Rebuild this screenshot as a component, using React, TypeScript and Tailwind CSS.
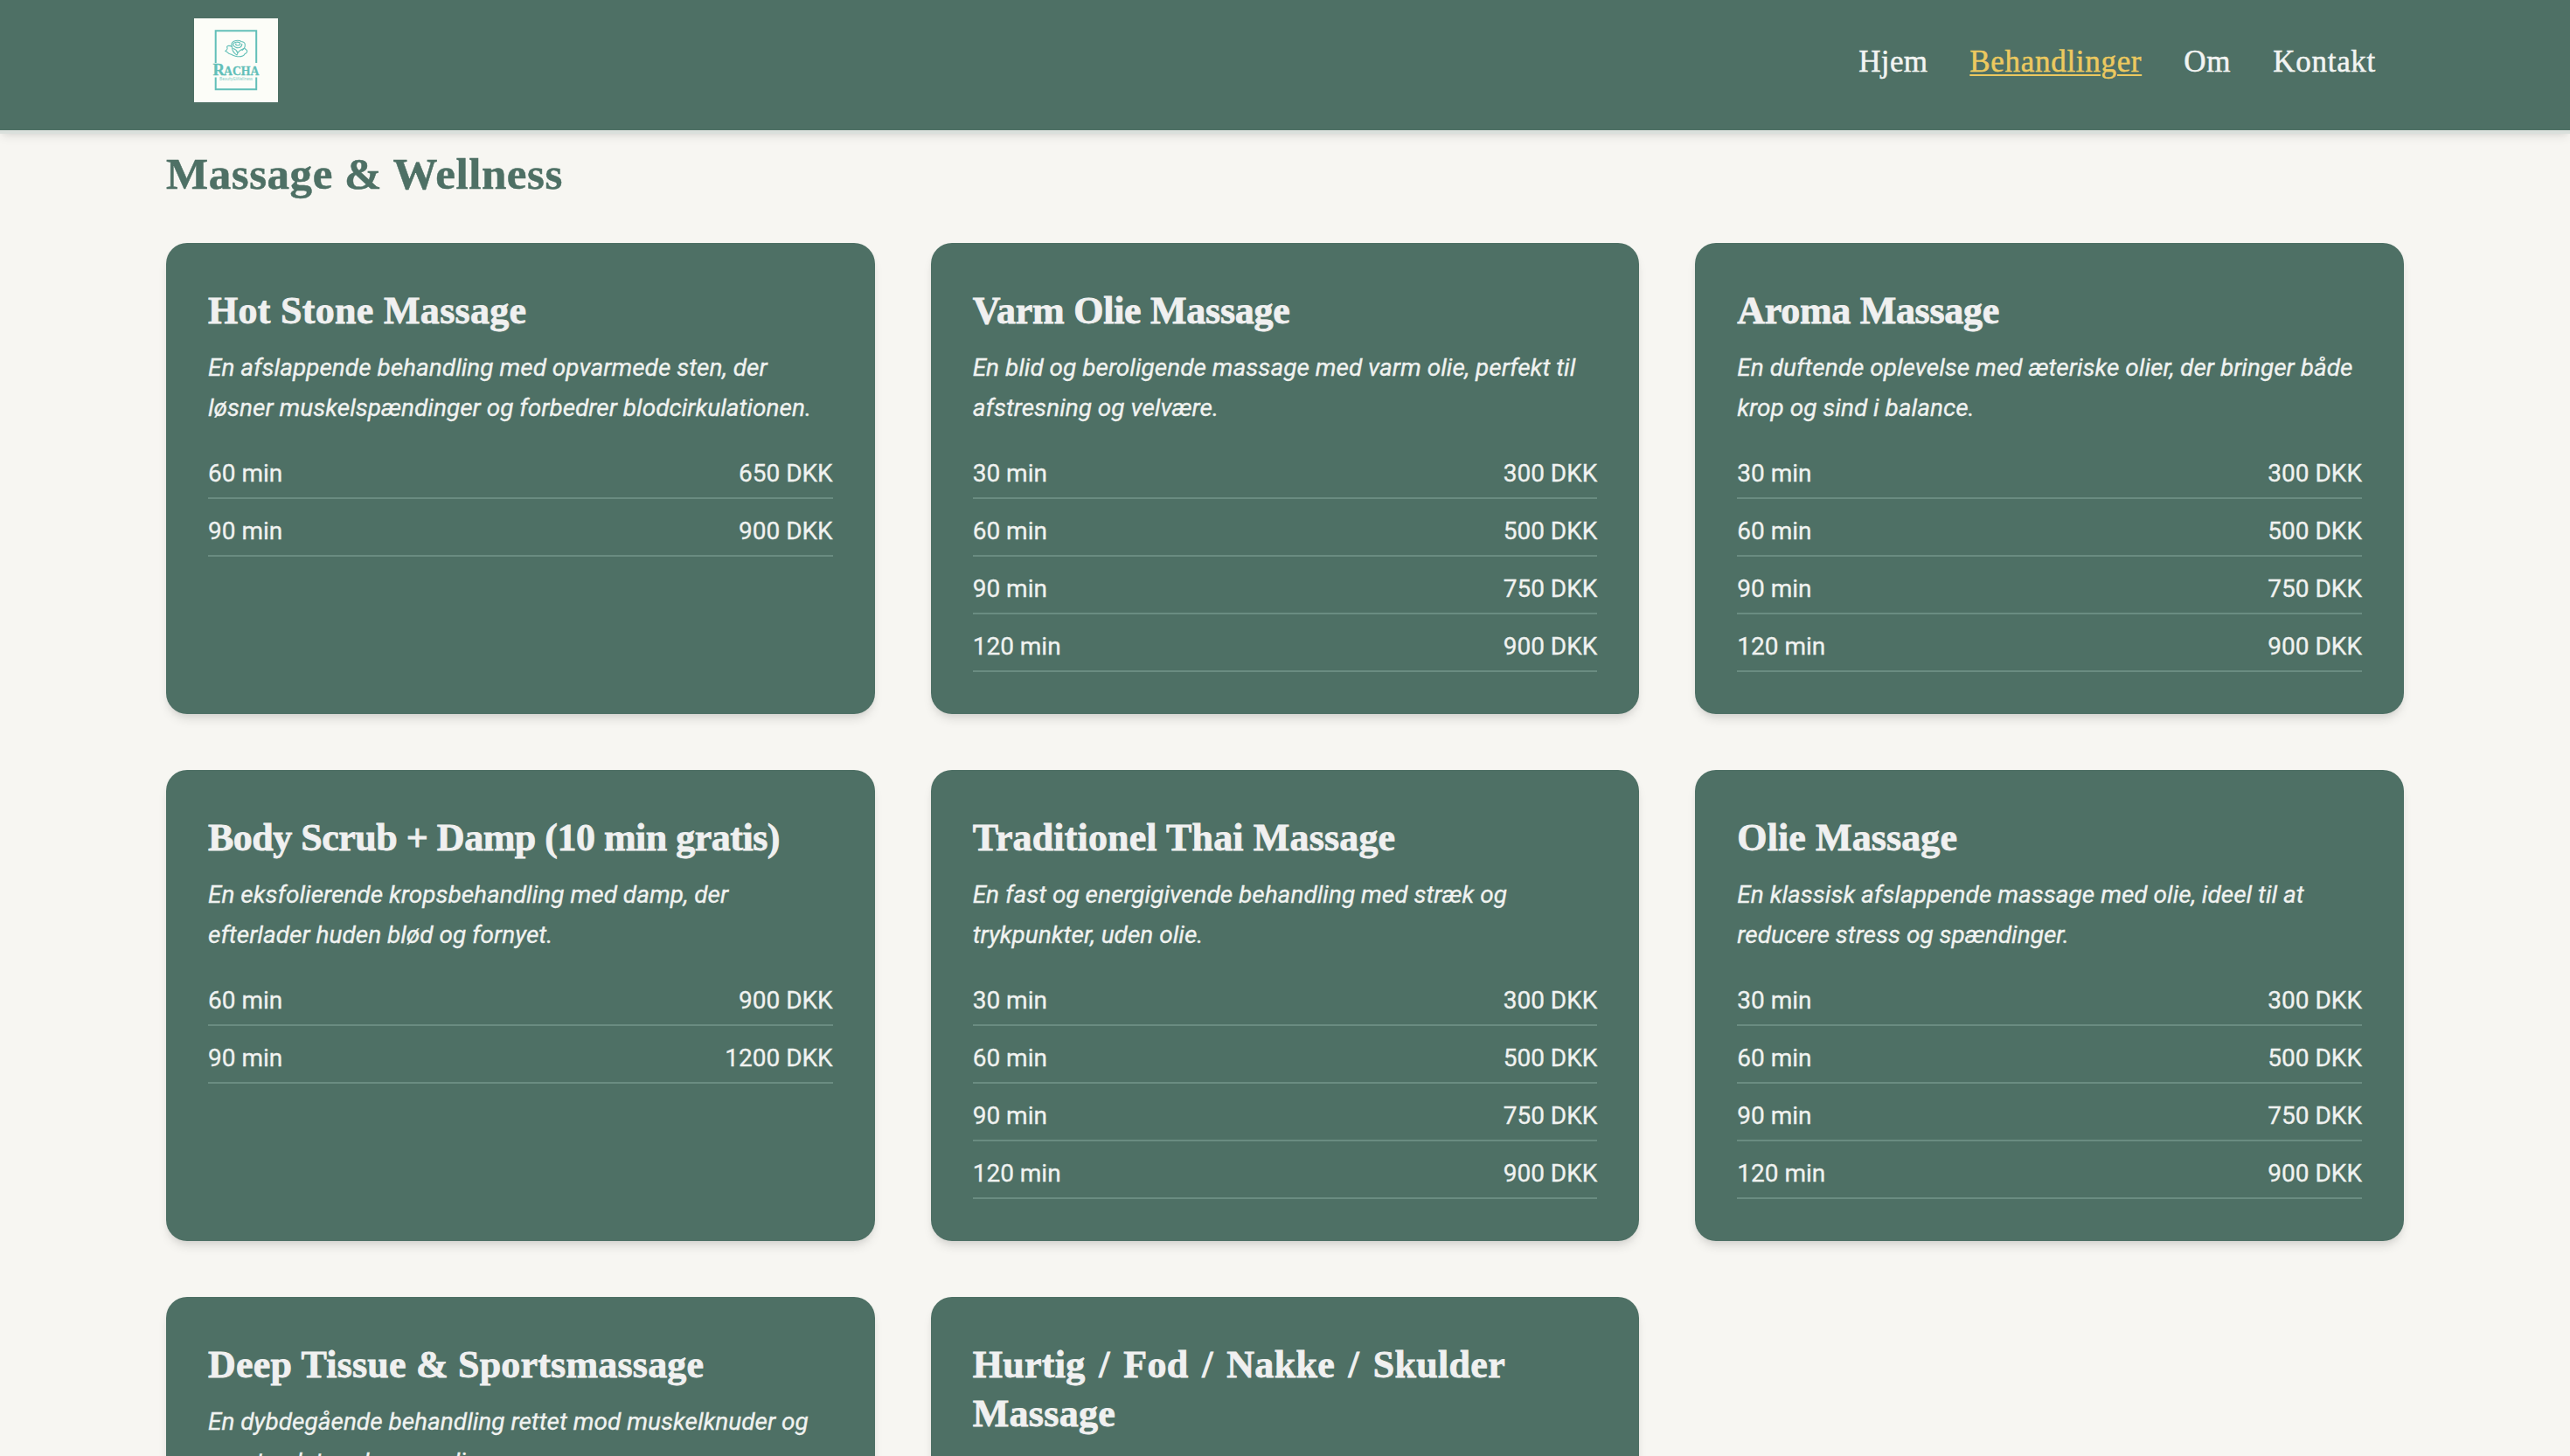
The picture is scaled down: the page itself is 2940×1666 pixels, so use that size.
// ─── Data ─────────────────────────────────────────────────────────────────────
const NAV_ITEMS = [
  { href: '#hjem', label: 'Hjem', className: 'tracking-[0.3px]' },
  { href: '#behandlinger', label: 'Behandlinger', className: 'tracking-[0.7px]' },
  { href: '#om', label: 'Om', className: 'tracking-[0.8px]' },
  { href: '#kontakt', label: 'Kontakt', className: 'tracking-[0.7px]' },
];

const ACTIVE = 'Behandlinger';

const FULL_PRICES = [
  ['30 min', '300 DKK'],
  ['60 min', '500 DKK'],
  ['90 min', '750 DKK'],
  ['120 min', '900 DKK'],
];

const TREATMENTS = [
  {
    title: 'Hot Stone Massage',
    tracking: 'tracking-[0.3px]',
    desc: 'En afslappende behandling med opvarmede sten, der løsner muskelspændinger og forbedrer blodcirkulationen.',
    prices: [['60 min', '650 DKK'], ['90 min', '900 DKK']],
  },
  {
    title: 'Varm Olie Massage',
    tracking: 'tracking-[-0.27px]',
    desc: 'En blid og beroligende massage med varm olie, perfekt til afstresning og velvære.',
    prices: FULL_PRICES,
  },
  {
    title: 'Aroma Massage',
    tracking: 'tracking-[-0.3px]',
    desc: 'En duftende oplevelse med æteriske olier, der bringer både krop og sind i balance.',
    prices: FULL_PRICES,
  },
  {
    title: 'Body Scrub + Damp (10 min gratis)',
    tracking: 'tracking-[-0.5px]',
    desc: 'En eksfolierende kropsbehandling med damp, der efterlader huden blød og fornyet.',
    prices: [['60 min', '900 DKK'], ['90 min', '1200 DKK']],
  },
  {
    title: 'Traditionel Thai Massage',
    tracking: 'tracking-[0.15px]',
    desc: 'En fast og energigivende behandling med stræk og trykpunkter, uden olie.',
    prices: FULL_PRICES,
  },
  {
    title: 'Olie Massage',
    tracking: 'tracking-[0.1px]',
    desc: 'En klassisk afslappende massage med olie, ideel til at reducere stress og spændinger.',
    prices: FULL_PRICES,
  },
  {
    title: 'Deep Tissue & Sportsmassage',
    tracking: 'tracking-[0.2px]',
    desc: 'En dybdegående behandling rettet mod muskelknuder og sportsrelaterede spændinger.',
    prices: FULL_PRICES,
  },
  {
    title: 'Hurtig / Fod / Nakke / Skulder Massage',
    tracking: 'tracking-[0.3px] [word-spacing:4.3px]',
    desc: 'En hurtig og effektiv behandling af fødder, nakke og skuldre.',
    prices: FULL_PRICES,
  },
];

// ─── Logo ─────────────────────────────────────────────────────────────────────
function Logo() {
  return (
    <svg viewBox="0 0 96 96" className="h-24 w-24 bg-[#fcfdf8]" aria-label="Racha Beauty & Wellness">
      <g fill="none" stroke="#62bfb8">
        <path d="M24.7 51V14.3H71.2V51M24.7 67.5V81.3H71.2V67.5" strokeWidth="2" />
        {/* rose */}
        <g strokeWidth="1.1" strokeLinejoin="round" strokeLinecap="round">
          <path d="M43.5 32.5c-1.5-2.5-.5-5 2-6.2 3-1.3 6-1.5 8.5.2 2.500.3 4.500 1.500 4.300 4 .2 2.500-1.300 4.500-3.300 6" />
          <path d="M44.500 29.500c1.500-2.500 5.500-3 8-1.500 1 1.500-.5 3-2.500 3-2 .2-3-1-2-2M44.500 30c1 3 5 4.500 8 3.300 1.500-.6 2.300-2 2.300-4" />
          <path d="M43.500 32.500c-2.500-1.500-5.500-1.500-6 .3 1.200 1 .7 3-1.800 4.700 2.500.3 3 3 5.300 3.300 3.500 1 5 2.700 8.500 2.900 4 .3 7 .3 8.500-3 2-1 3.300-2.200 2.500-4l-2.500-2.200" />
          <path d="M43.500 32.500c-.3 4 1.500 7 5.500 9.500 1-4.500 4-6 8-7.500M45 34.500c2.500 1 4 2.500 4.800 5" />
        </g>
      </g>
      <g fill="#62bfb8">
        <text x="21.600" y="64.700" fontFamily="Liberation Serif" fontWeight="700" fontSize="18" stroke="#62bfb8" strokeWidth="0.3" textLength="13.500" lengthAdjust="spacingAndGlyphs">R</text>
        <text x="34" y="64.700" fontFamily="Liberation Serif" fontWeight="700" fontSize="15" stroke="#62bfb8" strokeWidth="0.3" textLength="40.500" lengthAdjust="spacingAndGlyphs">ACHA</text>
        <text x="29" y="70.600" fontFamily="Lato" fontSize="5.200" textLength="38" lengthAdjust="spacingAndGlyphs" opacity="0.75">Beauty&amp;Wellness</text>
      </g>
    </svg>
  );
}

// ─── Header ───────────────────────────────────────────────────────────────────
function Header() {
  return (
    <header className="relative z-10 h-[153px] border-b-4 border-[#dae0dc] bg-[#4e7065] bg-clip-padding shadow-[0_4px_12px_-2px_rgba(0,0,0,0.1),0_2px_8px_-4px_rgba(0,0,0,0.1)]">
      <div className="mx-auto flex w-[2560px] items-start justify-between px-8 pt-[21px]">
        <Logo />
        <nav className="flex gap-12 pt-[30px] font-['Liberation_Serif',serif] text-[35px] leading-[40px] text-[#f2f4f2] [-webkit-text-stroke:0.5px]">
          {NAV_ITEMS.map(({ href, label, className }) => (
            <a
              key={href}
              href={href}
              className={`${className} ${label === ACTIVE ? 'text-[#ecc95f] underline decoration-[1.5px] underline-offset-[3px]' : ''}`}
            >
              {label}
            </a>
          ))}
        </nav>
      </div>
    </header>
  );
}

// ─── Treatment card ───────────────────────────────────────────────────────────
function TreatmentCard({ title, tracking, desc, prices }: (typeof TREATMENTS)[number]) {
  return (
    <article className="min-h-[539px] rounded-3xl bg-[#4e7065] px-12 pt-[50px] pb-12 text-[#f0f2f0] shadow-[0_8px_12px_-2px_rgba(0,0,0,0.1),0_4px_8px_-4px_rgba(0,0,0,0.1)]">
      <h3 className={`mb-3.5 font-['Liberation_Serif',serif] text-[44px] leading-[56px] font-bold text-[#f0f0f0] [-webkit-text-stroke:0.8px] ${tracking}`}>
        {title}
      </h3>
      <p className="mb-4 text-[28px] leading-[45.5px] italic [-webkit-text-stroke:0.3px]">{desc}</p>
      <ul className="text-[28px] leading-10 [-webkit-text-stroke:0.3px]">
        {prices.map(([time, price]) => (
          <li key={time} className="flex justify-between border-b-2 border-[#6a8c81] pt-[17px] pb-[7px]">
            <span>{time}</span>
            <span>{price}</span>
          </li>
        ))}
      </ul>
    </article>
  );
}

export default function App() {
  return (
    <div className="h-[1666px] overflow-hidden bg-[#f7f6f2] font-['Roboto',sans-serif]">
      <Header />
      <main className="mx-auto w-[2560px] pt-[14px]">
        <h2 className="mb-[47px] font-['Liberation_Serif',serif] text-[51px] leading-[64px] font-bold tracking-[0.55px] text-[#4e7065] [-webkit-text-stroke:0.5px]">
          Massage &amp; Wellness
        </h2>
        <div className="grid grid-cols-3 gap-16">
          {TREATMENTS.map((t) => (
            <TreatmentCard key={t.title} {...t} />
          ))}
        </div>
      </main>
    </div>
  );
}
